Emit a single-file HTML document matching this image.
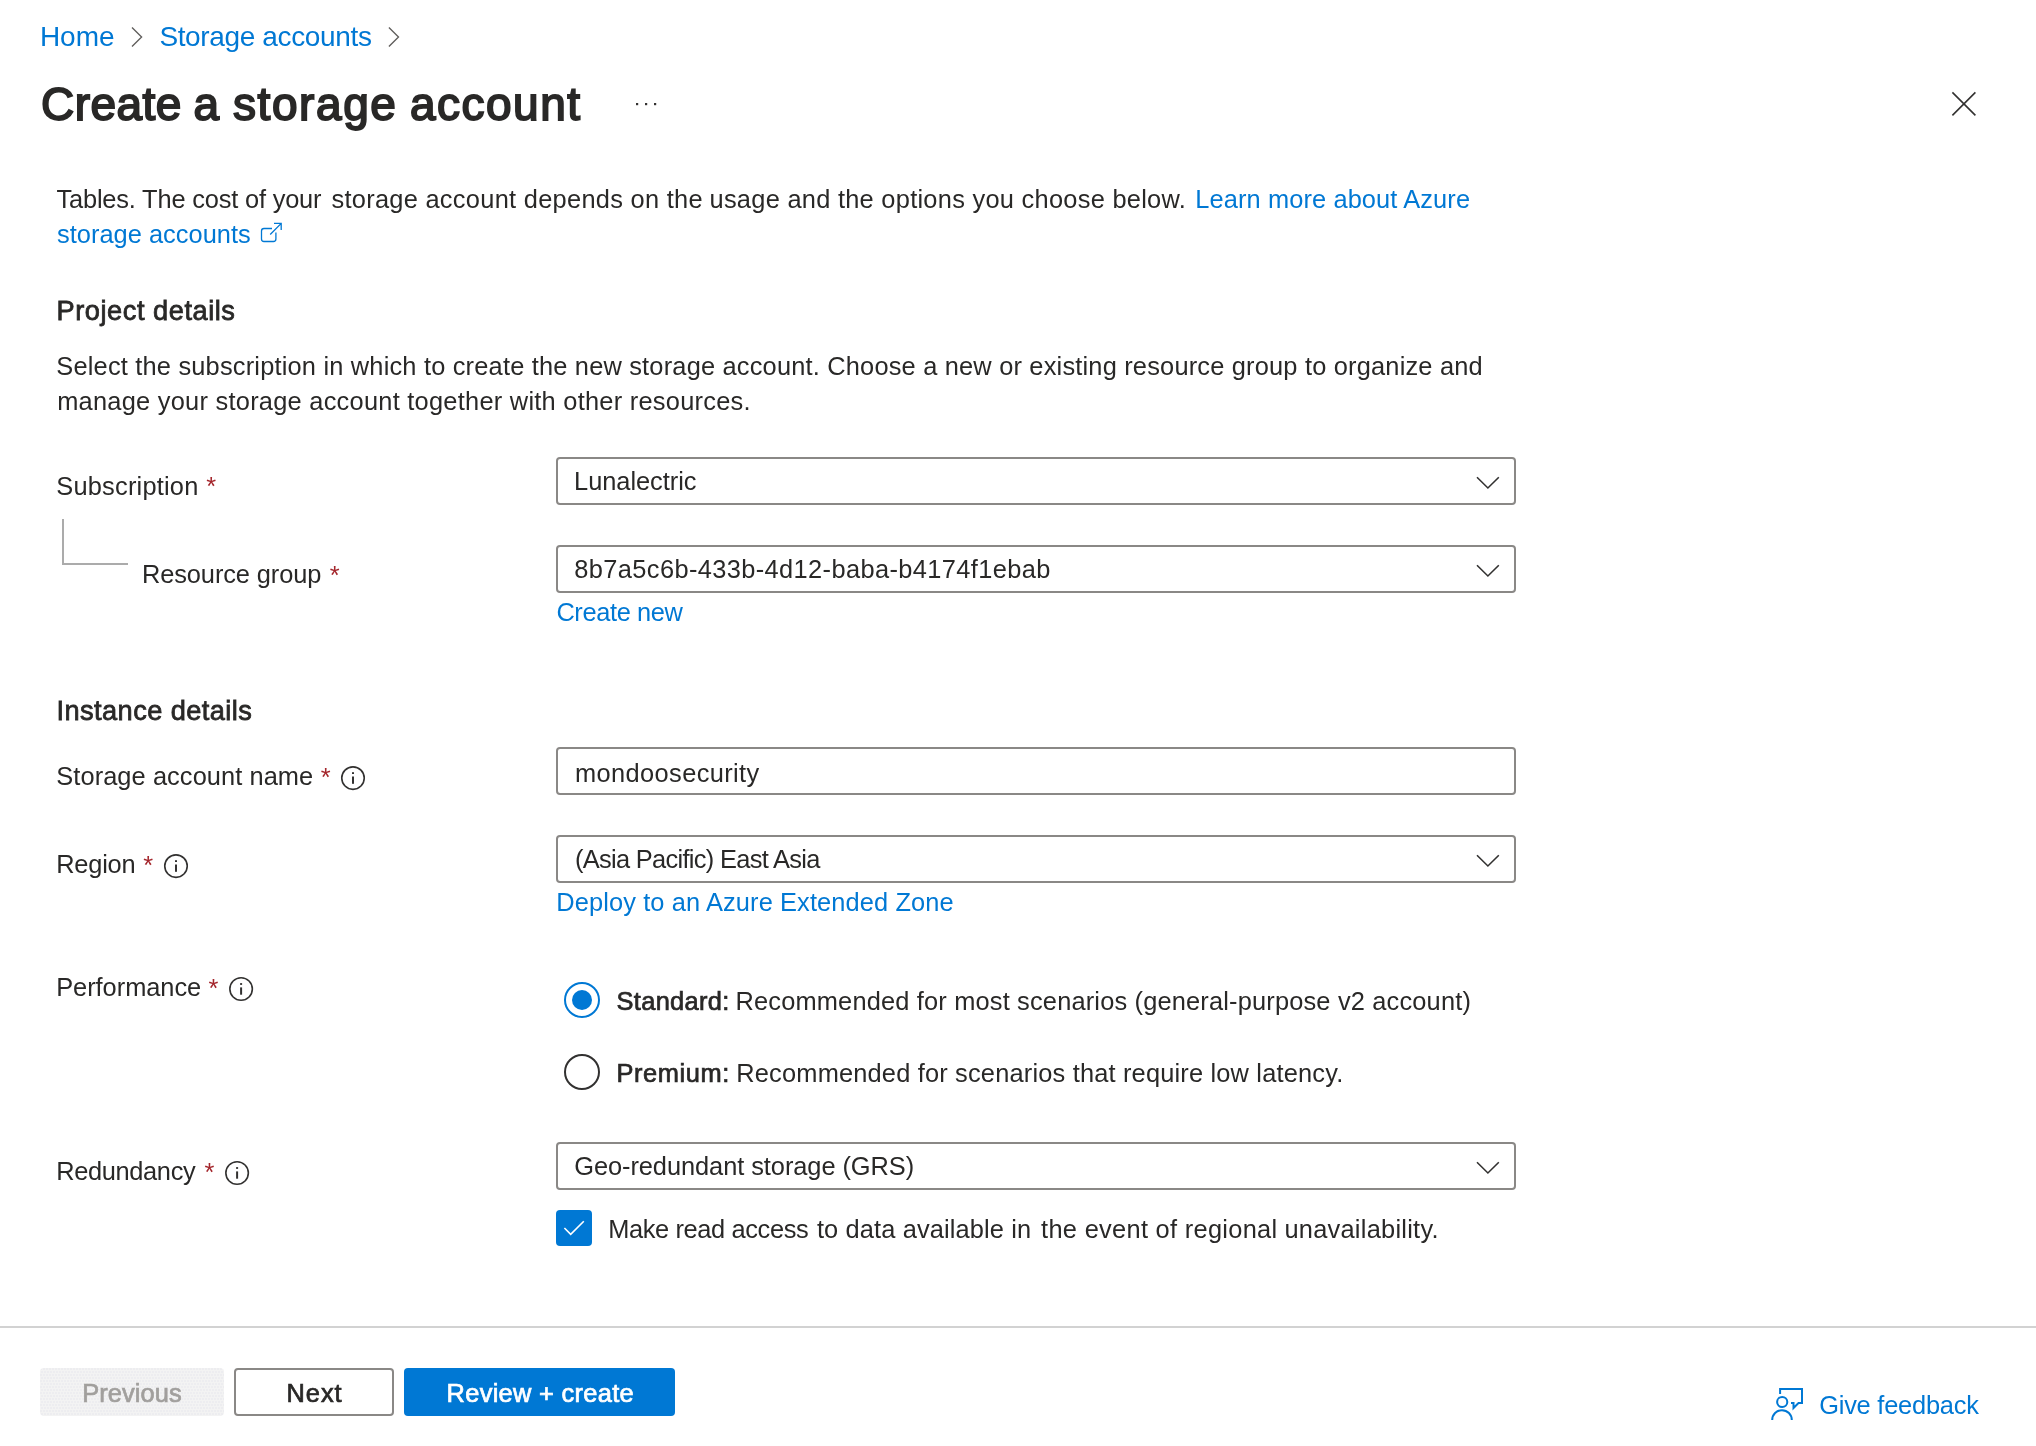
<!DOCTYPE html>
<html lang="en"><head><meta charset="utf-8"><title>Create a storage account - Microsoft Azure</title>
<style>
html,body{margin:0;padding:0;background:#fff;}
body{width:2036px;height:1446px;position:relative;overflow:hidden;font-family:"Liberation Sans",Arial,sans-serif;}
h1,h2,p,nav,main,section,footer,label{margin:0;padding:0;font:inherit;display:block;position:static;}
.t{position:absolute;display:block;white-space:nowrap;line-height:40px;height:40px;margin:0;padding:0;font-weight:400;font-style:normal;text-decoration:none;}
.box{position:absolute;box-sizing:border-box;border:2px solid #8a8886;border-radius:4px;background:#fff;}
svg{position:absolute;left:0;top:0;overflow:visible;}
.w{position:absolute;left:0;top:0;width:2036px;height:1446px;will-change:transform;}
</style></head><body>
<div class="w">
<!-- input boxes -->
<div class="box" style="left:556px;top:457px;width:960px;height:48px"></div>
<div class="box" style="left:556px;top:545px;width:960px;height:48px"></div>
<div class="box" style="left:556px;top:747px;width:960px;height:48px"></div>
<div class="box" style="left:556px;top:835px;width:960px;height:48px"></div>
<div class="box" style="left:556px;top:1142px;width:960px;height:48px"></div>
<!-- footer -->
<div style="position:absolute;left:0;top:1326px;width:2036px;height:2px;background:#d2d2d2"></div>
<div style="position:absolute;left:40px;top:1368px;width:184px;height:48px;border-radius:4px;background:radial-gradient(circle at 1px 1px,#ebebef 0.6px,rgba(235,235,239,0) 1px) 0 0/3px 6px,radial-gradient(circle at 1px 1px,#ebebef 0.6px,rgba(235,235,239,0) 1px) 1px 3px/3px 6px,#f3f3f3"></div>
<div style="position:absolute;left:234px;top:1368px;width:160px;height:48px;border-radius:4px;box-sizing:border-box;border:2px solid #8a8886;background:#fff"></div>
<div style="position:absolute;left:404px;top:1368px;width:271px;height:48px;border-radius:4px;background:#0078d4"></div>
<!-- checkbox -->
<div style="position:absolute;left:556px;top:1210px;width:36px;height:36px;border-radius:4px;background:#0078d4"></div>
<svg width="2036" height="1446" viewBox="0 0 2036 1446" fill="none">
 <!-- breadcrumb chevrons -->
 <path d="M132 27.4 L141.6 37 L132 46.6" stroke="#605e5c" stroke-width="1.35"/>
 <path d="M388.9 27.4 L398.5 37 L388.9 46.6" stroke="#605e5c" stroke-width="1.35"/>
 <!-- ellipsis -->
 <rect x="636" y="103" width="2.2" height="2.2" fill="#323130"/>
 <rect x="645" y="103" width="2.2" height="2.2" fill="#323130"/>
 <rect x="654" y="103" width="2.2" height="2.2" fill="#323130"/>
 <!-- close -->
 <path d="M1952.4 92.4 L1975.4 115.4 M1975.4 92.4 L1952.4 115.4" stroke="#323130" stroke-width="1.6"/>
 <!-- external link -->
 <path d="M272 228.5 H264 a2.5 2.5 0 0 0 -2.5 2.5 V239 a2.5 2.5 0 0 0 2.5 2.5 H273.4 a2.5 2.5 0 0 0 2.5 -2.5 V232.6" stroke="#0078d4" stroke-width="1.3"/>
 <path d="M270.2 234.5 L281 223.6 M274 223.4 H281.2 V230" stroke="#0078d4" stroke-width="1.3"/>
 <!-- connector -->
 <path d="M63 519 V564 H128" stroke="#ababab" stroke-width="2"/>
 <!-- dropdown chevrons -->
 <g stroke="#323130" stroke-width="1.6">
  <path d="M1477 477.3 L1487.9 488 L1498.8 477.3"/>
  <path d="M1477 565.3 L1487.9 576 L1498.8 565.3"/>
  <path d="M1477 855.3 L1487.9 866 L1498.8 855.3"/>
  <path d="M1477 1162.3 L1487.9 1173 L1498.8 1162.3"/>
 </g>
 <!-- info icons -->
 <g stroke="#323130" stroke-width="1.6">
  <circle cx="353" cy="778.1" r="11.25"/>
  <circle cx="176" cy="866.1" r="11.25"/>
  <circle cx="241.1" cy="989" r="11.25"/>
  <circle cx="237.1" cy="1173" r="11.25"/>
 </g>
 <g fill="#323130">
  <rect x="352" y="776.5" width="2" height="7.3"/><rect x="352" y="772.2" width="2" height="1.8"/>
  <rect x="175" y="864.5" width="2" height="7.3"/><rect x="175" y="860.2" width="2" height="1.8"/>
  <rect x="240.1" y="987.4" width="2" height="7.3"/><rect x="240.1" y="983.1" width="2" height="1.8"/>
  <rect x="236.1" y="1171.4" width="2" height="7.3"/><rect x="236.1" y="1167.1" width="2" height="1.8"/>
 </g>
 <!-- radios -->
 <circle cx="582" cy="1000" r="17" stroke="#0078d4" stroke-width="2" fill="#fff"/>
 <circle cx="582" cy="1000" r="10" fill="#0078d4"/>
 <circle cx="582" cy="1072" r="17" stroke="#323130" stroke-width="2" fill="#fff"/>
 <!-- check mark -->
 <path d="M564.4 1228 L570.7 1234.4 L583.8 1221.3" stroke="#fff" stroke-width="1.6"/>
 <!-- feedback icon -->
 <g stroke="#0078d4" stroke-width="2">
  <path d="M1780.1 1394 V1388.9 H1802 V1403 H1798.5 L1793.5 1408 V1403 H1791"/>
  <circle cx="1782.2" cy="1402" r="5.1"/>
  <path d="M1772.2 1420 a9.8 9.8 0 0 1 19.6 0"/>
 </g>
</svg>

<nav aria-label="breadcrumb">
<a class="t" style="left:39.90px;top:17px;font-size:28px;color:#0078d4;letter-spacing:-0.006px;">Home</a>
<a class="t" style="left:159.40px;top:17px;font-size:28px;color:#0078d4;letter-spacing:-0.361px;">Storage accounts</a>
</nav>
<h1>
<span class="t" style="left:41.12px;top:84px;font-size:46px;color:#292827;letter-spacing:0.435px;-webkit-text-stroke:1.84px #292827;">Create</span>
<span class="t" style="left:193.52px;top:84px;font-size:46px;color:#292827;letter-spacing:0.000px;-webkit-text-stroke:1.84px #292827;">a</span>
<span class="t" style="left:232.92px;top:84px;font-size:46px;color:#292827;letter-spacing:1.602px;-webkit-text-stroke:1.84px #292827;">storage</span>
<span class="t" style="left:409.92px;top:84px;font-size:46px;color:#292827;letter-spacing:1.505px;-webkit-text-stroke:1.84px #292827;">account</span>
</h1>
<main>
<p>
<span class="t" style="left:56.50px;top:179px;font-size:25.4px;color:#292827;letter-spacing:-0.178px;">Tables. The cost of your</span>
<span class="t" style="left:331.40px;top:179px;font-size:25.4px;color:#292827;letter-spacing:0.291px;">storage account depends on the</span>
<span class="t" style="left:709.50px;top:179px;font-size:25.4px;color:#292827;letter-spacing:0.274px;">usage and the options you choose below.</span>
<a class="t" style="left:1195.30px;top:179px;font-size:25.4px;color:#0078d4;letter-spacing:0.110px;">Learn more about Azure</a>
<a class="t" style="left:57.00px;top:214px;font-size:25.4px;color:#0078d4;letter-spacing:0.022px;">storage accounts</a>
</p>
<section>
<h2 class="t" style="left:56.58px;top:291px;font-size:27.2px;color:#292827;letter-spacing:0.541px;-webkit-text-stroke:0.76px #292827;">Project details</h2>
<p>
<span class="t" style="left:56.30px;top:346px;font-size:25.4px;color:#292827;letter-spacing:0.192px;">Select the subscription in which to create the new storage account. Choose a new or existing resource group to organize and</span>
<span class="t" style="left:57.20px;top:381px;font-size:25.4px;color:#292827;letter-spacing:0.254px;">manage your storage account together with other resources.</span>
</p>
<label class="t" style="left:56.25px;top:466px;font-size:25.4px;color:#292827;letter-spacing:0.213px;">Subscription</label>
<span class="t" style="left:206.35px;top:466px;font-size:25.4px;color:#a4262c">*</span>
<span class="t" style="left:574.10px;top:461px;font-size:25.4px;color:#292827;letter-spacing:-0.039px;">Lunalectric</span>
<label class="t" style="left:142.00px;top:554px;font-size:25.4px;color:#292827;letter-spacing:-0.103px;">Resource group</label>
<span class="t" style="left:329.75px;top:555px;font-size:25.4px;color:#a4262c">*</span>
<span class="t" style="left:574.30px;top:549px;font-size:25.4px;color:#292827;letter-spacing:0.381px;">8b7a5c6b-433b-4d12-baba-b4174f1ebab</span>
<a class="t" style="left:556.40px;top:592px;font-size:25.4px;color:#0078d4;letter-spacing:-0.367px;">Create new</a>
</section>
<section>
<h2 class="t" style="left:56.48px;top:691px;font-size:27.2px;color:#292827;letter-spacing:0.434px;-webkit-text-stroke:0.76px #292827;">Instance details</h2>
<label class="t" style="left:56.30px;top:756px;font-size:25.4px;color:#292827;letter-spacing:0.076px;">Storage account name</label>
<span class="t" style="left:320.80px;top:757px;font-size:25.4px;color:#a4262c">*</span>
<span class="t" style="left:575.10px;top:753px;font-size:25.4px;color:#292827;letter-spacing:0.374px;">mondoosecurity</span>
<label class="t" style="left:56.20px;top:844px;font-size:25.4px;color:#292827;letter-spacing:-0.208px;">Region</label>
<span class="t" style="left:143.35px;top:845px;font-size:25.4px;color:#a4262c">*</span>
<span class="t" style="left:574.90px;top:839px;font-size:25.4px;color:#292827;letter-spacing:-0.675px;">(Asia Pacific) East Asia</span>
<a class="t" style="left:556.30px;top:882px;font-size:25.4px;color:#0078d4;letter-spacing:0.113px;">Deploy to an Azure Extended Zone</a>
<label class="t" style="left:56.20px;top:967px;font-size:25.4px;color:#292827;letter-spacing:-0.033px;">Performance</label>
<span class="t" style="left:208.55px;top:968px;font-size:25.4px;color:#a4262c">*</span>
<label>
<b class="t" style="left:616.56px;top:981px;font-size:25.4px;color:#292827;letter-spacing:0.330px;-webkit-text-stroke:0.71px #292827;">Standard:</b>
<span class="t" style="left:735.50px;top:981px;font-size:25.4px;color:#292827;letter-spacing:0.172px;">Recommended for most scenarios (general-purpose v2 account)</span>
</label>
<label>
<b class="t" style="left:616.56px;top:1053px;font-size:25.4px;color:#292827;letter-spacing:0.588px;-webkit-text-stroke:0.71px #292827;">Premium:</b>
<span class="t" style="left:736.30px;top:1053px;font-size:25.4px;color:#292827;letter-spacing:0.181px;">Recommended for scenarios that require low latency.</span>
</label>
<label class="t" style="left:56.20px;top:1151px;font-size:25.4px;color:#292827;letter-spacing:-0.342px;">Redundancy</label>
<span class="t" style="left:204.50px;top:1152px;font-size:25.4px;color:#a4262c">*</span>
<span class="t" style="left:574.20px;top:1146px;font-size:25.4px;color:#292827;letter-spacing:-0.061px;">Geo-redundant storage (GRS)</span>
<label>
<span class="t" style="left:608.20px;top:1209px;font-size:25.4px;color:#292827;letter-spacing:-0.370px;">Make read access</span>
<span class="t" style="left:816.90px;top:1209px;font-size:25.4px;color:#292827;letter-spacing:0.136px;">to data available in</span>
<span class="t" style="left:1041.10px;top:1209px;font-size:25.4px;color:#292827;letter-spacing:0.298px;">the event of regional</span>
<span class="t" style="left:1284.40px;top:1209px;font-size:25.4px;color:#292827;letter-spacing:0.258px;">unavailability.</span>
</label>
</section>
</main>
<footer>
<span class="t" style="left:82.16px;top:1373px;font-size:25.4px;color:#a19f9d;letter-spacing:0.100px;-webkit-text-stroke:0.71px #a19f9d;">Previous</span>
<span class="t" style="left:286.56px;top:1373px;font-size:25.4px;color:#292827;letter-spacing:0.946px;-webkit-text-stroke:0.71px #292827;">Next</span>
<span class="t" style="left:446.56px;top:1373px;font-size:25.4px;color:#ffffff;letter-spacing:0.311px;-webkit-text-stroke:0.71px #ffffff;">Review + create</span>
<a class="t" style="left:1819.20px;top:1385px;font-size:25.4px;color:#0078d4;letter-spacing:-0.218px;">Give feedback</a>
</footer>
</div>
</body></html>
